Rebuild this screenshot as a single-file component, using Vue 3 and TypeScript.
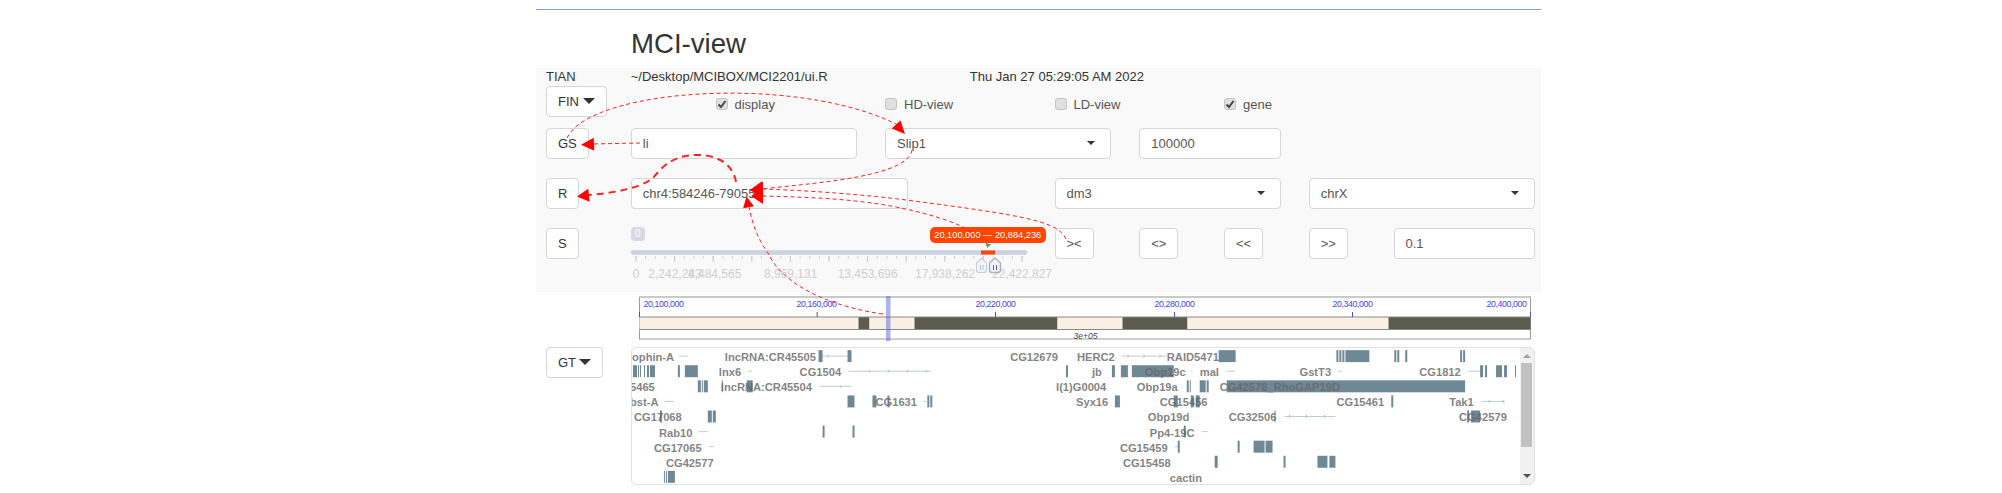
<script setup lang="ts">

type Span = [number, number];

interface GeneLine {
    row: number;
    x1: number;
    x2: number;
    marks?: number[];
}

interface Arrow {
    d: string;
    width: number;
    tip: [number, number];
    from: [number, number];
    len: number;
    wide: number;
}

const rowTop = (row: number) => 350 + row * 15.125;

const labels: [number, number, string][] = [
    [0, 632, 'ophin-A'], [0, 725, 'lncRNA:CR45505'], [0, 1011, 'CG12679'], [0, 1078, 'HERC2'], [0, 1168, 'RAID5471'],
    [1, 719, 'lnx6'], [1, 800, 'CG1504'], [1, 1093, 'jb'], [1, 1146, 'Obp19c'], [1, 1201, 'mal'], [1, 1301, 'GstT3'], [1, 1421, 'CG1812'],
    [2, 630, '5465'], [2, 721, 'lncRNA:CR45504'], [2, 1057, 'l(1)G0004'], [2, 1138, 'Obp19a'], [2, 1221, 'CG42578_RhoGAP19D'],
    [3, 630, 'bst-A'], [3, 876, 'CG1631'], [3, 1077, 'Syx16'], [3, 1161, 'CG15456'], [3, 1338, 'CG15461'], [3, 1451, 'Tak1'],
    [4, 634, 'CG17068'], [4, 1149, 'Obp19d'], [4, 1230, 'CG32506'], [4, 1461, 'CG42579'],
    [5, 659, 'Rab10'], [5, 1151, 'Pp4-19C'],
    [6, 654, 'CG17065'], [6, 1121, 'CG15459'],
    [7, 666, 'CG42577'], [7, 1124, 'CG15458'],
    [8, 1171, 'cactin'],
];

const bars: Span[][] = [
    [[819, 823], [848, 852], [1220, 1237], [1338, 1340], [1341, 1343], [1344, 1346], [1347, 1371], [1396, 1398], [1399, 1401], [1407, 1409], [1462, 1464], [1465, 1467]],
    [[633, 637], [638, 639], [640, 641], [644, 645], [647, 649], [650, 655], [678, 680], [685, 698], [1067, 1069], [1113, 1116], [1122, 1129], [1133, 1175], [1482, 1485], [1487, 1489], [1498, 1504], [1506, 1509], [1517, 1518]],
    [[698, 701], [702, 703], [704, 708], [722, 723], [747, 753], [1188, 1190], [1191, 1192], [1201, 1207], [1208, 1210], [1228, 1467]],
    [[848, 855], [873, 877], [888, 890], [928, 930], [931, 933], [1116, 1121], [1175, 1179], [1192, 1195], [1197, 1201], [1393, 1395]],
    [[660, 662], [708, 712], [713, 716], [1276, 1277], [1469, 1471], [1473, 1482]],
    [[823, 825], [853, 855], [1185, 1187]],
    [[1179, 1181], [1239, 1241], [1255, 1266], [1267, 1274]],
    [[1216, 1219], [1285, 1287], [1319, 1329], [1331, 1337]],
    [[664, 665], [666, 667], [668, 675]],
];

const geneLines: GeneLine[] = [
    { row: 0, x1: 679, x2: 688 },
    { row: 0, x1: 823, x2: 848, marks: [829] },
    { row: 0, x1: 1123, x2: 1168, marks: [1130, 1146, 1162] },
    { row: 1, x1: 748, x2: 752 },
    { row: 1, x1: 849, x2: 932, marks: [871, 890, 909, 928] },
    { row: 1, x1: 1192, x2: 1194 },
    { row: 1, x1: 1228, x2: 1236 },
    { row: 1, x1: 1339, x2: 1344 },
    { row: 1, x1: 1470, x2: 1482 },
    { row: 2, x1: 820, x2: 852, marks: [842] },
    { row: 3, x1: 665, x2: 674 },
    { row: 3, x1: 924, x2: 927 },
    { row: 3, x1: 1483, x2: 1507, marks: [1492, 1506] },
    { row: 4, x1: 1286, x2: 1337, marks: [1292, 1309, 1327] },
    { row: 5, x1: 699, x2: 708 },
    { row: 5, x1: 1203, x2: 1209 },
    { row: 6, x1: 709, x2: 714 },
    { row: 6, x1: 1176, x2: 1179 },
];

const segments: { x: number; w: number; dark: boolean }[] = [
    { x: 639, w: 219, dark: false },
    { x: 858, w: 11, dark: true },
    { x: 869, w: 45, dark: false },
    { x: 914, w: 143, dark: true },
    { x: 1057, w: 65, dark: false },
    { x: 1122, w: 65, dark: true },
    { x: 1187, w: 201, dark: false },
    { x: 1388, w: 142, dark: true },
];

const axisTicks = [639, 816.7, 995, 1174, 1352, 1530];

const majorStep = 38.6;
const majorTicks = Array.from({ length: 11 }, (_, i) => 636 + i * majorStep);
const minorTicks = Array.from({ length: 41 }, (_, i) => 636 + (i * majorStep) / 4);

const gridLabels: [number, string][] = [
    [636, '0'], [675, '2,242,283'], [714.7, '4,484,565'], [790.7, '8,969,131'],
    [867.7, '13,453,696'], [945, '17,938,262'], [1022, '22,422,827'],
];

const arrows: Arrow[] = [
    { d: 'M567 138 C590 88 800 74 900 126', width: 1, tip: [905, 134], from: [890, 118], len: 13, wide: 12 },
    { d: 'M640 143 L592 144', width: 1, tip: [581, 144.7], from: [600, 144], len: 13, wide: 13 },
    { d: 'M736 182 C732 160 712 155 697 155 C670 155 660 170 653 178 C640 188 615 193 588 195', width: 2, tip: [577, 196.5], from: [600, 194], len: 12, wide: 13 },
    { d: 'M912 150 C908 175 830 182 760 189', width: 1, tip: [750, 190], from: [775, 188], len: 13, wide: 16 },
    { d: 'M1066 239 C1058 222 1030 216 906 200 C860 194 800 190 760 189', width: 1, tip: [750, 190], from: [775, 190], len: 13, wide: 16 },
    { d: 'M988 245 C975 230 950 218 896 207 C850 198 800 197 760 196', width: 1, tip: [751, 196], from: [775, 196], len: 12, wide: 16 },
    { d: 'M883 314 C820 305 780 280 768 253 C755 235 752 220 749 207', width: 1, tip: [746.5, 196.5], from: [750, 215], len: 11, wide: 11 },
];

const headPoints = (a: Arrow) => {
    const dx = a.tip[0] - a.from[0];
    const dy = a.tip[1] - a.from[1];
    const n = Math.hypot(dx, dy);
    const ux = dx / n;
    const uy = dy / n;
    const bx = a.tip[0] - ux * a.len;
    const by = a.tip[1] - uy * a.len;
    const hw = a.wide / 2;
    return `${a.tip[0]},${a.tip[1]} ${bx - uy * hw},${by + ux * hw} ${bx + uy * hw},${by - ux * hw}`;
};

</script>

<template>
    <div class="page">
        <hr class="rule" />
        <h2 class="title">MCI-view</h2>

        <div class="well">
            <div class="grid info">
                <div>TIAN</div>
                <div class="span-3">~/Desktop/MCIBOX/MCI2201/ui.R</div>
                <div class="date">Thu Jan 27 05:29:05 AM 2022</div>
            </div>

            <div class="grid row-first">
                <button class="btn">FIN <span class="caret"></span></button>
                <div></div>
                <label class="check">
                    <span class="box"><svg width="10" height="10" viewBox="0 0 10 10"><path d="M1.5 5.5 L4 8 L8.5 2" fill="none" stroke="#444" stroke-width="2" /></svg></span>
                    display
                </label>
                <div></div>
                <label class="check">
                    <span class="box"></span>
                    HD-view
                </label>
                <div></div>
                <label class="check">
                    <span class="box"></span>
                    LD-view
                </label>
                <div></div>
                <label class="check">
                    <span class="box"><svg width="10" height="10" viewBox="0 0 10 10"><path d="M1.5 5.5 L4 8 L8.5 2" fill="none" stroke="#444" stroke-width="2" /></svg></span>
                    gene
                </label>
            </div>

            <div class="grid row-gs">
                <button class="btn">GS</button>
                <div class="field span-3">li</div>
                <div class="field select span-3">Slip1<span class="select-caret"></span></div>
                <div class="field span-2">100000</div>
            </div>

            <div class="grid row-r">
                <button class="btn">R</button>
                <div class="field span-4 chr">chr4:584246-790551</div>
                <div class="field select from-7">dm3<span class="select-caret"></span></div>
                <div class="field select span-3">chrX<span class="select-caret"></span></div>
            </div>

            <div class="grid row-s">
                <button class="btn">S</button>
                <div class="slider span-5">
                    <span class="slider-min">0</span>
                    <span class="slider-tip">20,100,000 — 20,884,236</span>
                    <svg class="slider-svg" width="396" height="64" viewBox="631 228 396 64">
                        <rect x="631" y="250.5" width="396" height="4" rx="2" fill="#ccd3e0" stroke="#c3cbd9" stroke-width="0.5" />
                        <rect x="981" y="250.5" width="14" height="4" fill="#ff4500" />
                        <polygon points="985.5,244 991,244 987.5,248" fill="#4caf50" />
                        <line v-for="t in minorTicks" :key="t" :x1="t" :x2="t" y1="256" y2="259" stroke="#d4d4d4" />
                        <line v-for="t in majorTicks" :key="t" :x1="t" :x2="t" y1="256" y2="262" stroke="#c8c8c8" />
                        <text v-for="g in gridLabels" :key="g[1]" :x="g[0]" y="278" class="grid-label">{{ g[1] }}</text>
                        <g fill="#f2f4f8" stroke="#c9d0dd" stroke-width="1.2">
                            <path d="M976.5 263 L981.5 258 L986.5 263 L986.5 270 Q986.5 272.5 984 272.5 L979 272.5 Q976.5 272.5 976.5 270 Z" />
                        </g>
                        <path d="M980.5 265 V270 M983 265 V270" stroke="#b8c0ce" stroke-width="1" />
                        <path d="M989.5 263 L995 258 L1000.5 263 L1000.5 270 Q1000.5 272.5 998 272.5 L992 272.5 Q989.5 272.5 989.5 270 Z" fill="#f2f4f8" stroke="#a7b1c4" stroke-width="1.4" />
                        <path d="M993.5 265 V270 M996.5 265 V270" stroke="#606a7a" stroke-width="1" />
                    </svg>
                </div>
                <button class="btn col-7 step">&gt;&lt;</button>
                <button class="btn step">&lt;&gt;</button>
                <button class="btn step">&lt;&lt;</button>
                <button class="btn step">&gt;&gt;</button>
                <div class="field span-2">0.1</div>
            </div>
        </div>

        <div class="plot">
            <svg width="893" height="46" viewBox="638.5 296 893 46">
                <rect x="639" y="297" width="891" height="42" fill="#fff" stroke="#9b9b9b" />
                <line x1="639" x2="1530" y1="297" y2="297" stroke="#c9c9c9" stroke-width="2" />
                <rect v-for="s in segments" :key="s.x" :x="s.x" y="317" :width="s.w" height="12.5" :fill="s.dark ? '#5c5b4f' : '#f9efe5'" />
                <line x1="639" x2="1530" y1="317" y2="317" stroke="#8a8a80" />
                <line x1="639" x2="1530" y1="329.5" y2="329.5" stroke="#8a8a80" />
                <line v-for="t in axisTicks" :key="t" :x1="t" :x2="t" y1="312" y2="317" stroke="#4a4ae0" />
                <text x="643" y="307" class="axis-label">20,100,000</text>
                <text x="816" y="307" class="axis-label mid">20,160,000</text>
                <text x="995" y="307" class="axis-label mid">20,220,000</text>
                <text x="1174" y="307" class="axis-label mid">20,280,000</text>
                <text x="1352" y="307" class="axis-label mid">20,340,000</text>
                <text x="1526" y="307" class="axis-label end">20,400,000</text>
                <text x="1073" y="339" class="axis-note">3e+05</text>
                <rect x="885.5" y="296" width="4.5" height="45" fill="#5a66e0" fill-opacity="0.5" />
            </svg>
        </div>

        <div class="grid row-gt">
            <button class="btn">GT <span class="caret"></span></button>
            <div class="genes">
                <svg class="genes-svg" width="890" height="136" viewBox="632 348 890 136">
                    <line v-for="(l, i) in geneLines" :key="'l' + i" :x1="l.x1" :x2="l.x2" :y1="rowTop(l.row) + 6" :y2="rowTop(l.row) + 6" stroke="#bccdd6" />
                    <g v-for="(l, i) in geneLines" :key="'m' + i">
                        <path v-for="m in l.marks ?? []" :key="m" :d="`M${m - 1.5} ${rowTop(l.row) + 4.5} L${m} ${rowTop(l.row) + 6} L${m - 1.5} ${rowTop(l.row) + 7.5}`" fill="none" stroke="#aebfca" />
                    </g>
                    <g v-for="(row, r) in bars" :key="'b' + r">
                        <rect v-for="b in row" :key="b[0]" :x="b[0]" :y="rowTop(r)" :width="b[1] - b[0]" height="12" fill="#6f8896" />
                    </g>
                    <text v-for="t in labels" :key="t[2]" :x="t[1]" :y="rowTop(t[0]) + 11" class="gene-label">{{ t[2] }}</text>
                </svg>
                <div class="scroll">
                    <span class="scroll-up"></span>
                    <span class="scroll-thumb"></span>
                    <span class="scroll-down"></span>
                </div>
            </div>
        </div>

        <svg class="arrows" width="2002" height="493" viewBox="0 0 2002 493">
            <g v-for="(a, i) in arrows" :key="i">
                <path :d="a.d" fill="none" stroke="#f22" :stroke-width="a.width" :stroke-dasharray="a.width > 1.5 ? '7 5' : '4 3'" />
                <polygon :points="headPoints(a)" fill="#f00" />
            </g>
        </svg>
    </div>
</template>

<style scoped>
.page {
    position: relative;
    width: 1005px;
    height: 493px;
    margin-left: 536px;
    font-family: "Liberation Sans", Arial, sans-serif;
    font-size: 13px;
    color: #333;
}

.rule {
    margin: 0;
    position: relative;
    top: 9px;
    height: 1px;
    border: 0;
    background: #86a0d8;
}

.title {
    margin: 0;
    padding: 28px 0 0 95px;
    height: 39px;
    font-size: 27.6px;
    font-weight: 500;
    line-height: 30px;
    color: #333;
}

.well {
    background: #f9f9f9;
    height: 224px;
    padding: 0 6px 0 10px;
    box-sizing: border-box;
}

.grid {
    display: grid;
    grid-template-columns: repeat(12, 56.75px);
    column-gap: 28px;
}

.span-2 { grid-column: span 2; }
.span-3 { grid-column: span 3; }
.span-4 { grid-column: span 4; }
.span-5 { grid-column: span 5; }
.col-7 { grid-column-start: 7; }
.from-7 { grid-column: 7 / span 3; }

.info {
    height: 18px;
    line-height: 18px;
    white-space: nowrap;
}

.date {
    grid-column: 6 / span 4;
}

.row-first {
    height: 42px;
}

.row-gs,
.row-r {
    height: 50px;
}

.btn {
    justify-self: start;
    height: 31px;
    padding: 0 11px;
    font: inherit;
    color: #333;
    background: #fff;
    border: 1px solid #d6d6d6;
    border-radius: 4px;
    white-space: nowrap;
}

.step {
    width: 39px;
    padding: 0;
    text-align: center;
    color: #555;
}

.caret {
    display: inline-block;
    vertical-align: 2px;
    border-top: 6px solid #333;
    border-left: 6px solid transparent;
    border-right: 6px solid transparent;
}

.check {
    display: flex;
    align-items: center;
    gap: 7px;
    height: 20px;
    margin-top: 8px;
    color: #555;
    white-space: nowrap;
}

.box {
    display: flex;
    align-items: center;
    justify-content: center;
    flex: none;
    width: 12px;
    height: 12px;
    background: #e0e0e0;
    border: 1px solid #c4c4c4;
    border-radius: 3px;
    box-sizing: border-box;
}

.field {
    position: relative;
    height: 31px;
    padding: 0 11px;
    line-height: 29px;
    color: #555;
    background: #fff;
    border: 1px solid #d6d6d6;
    border-radius: 4px;
    box-sizing: border-box;
    white-space: nowrap;
    overflow: hidden;
}

.chr {
    width: 277px;
}

.select-caret {
    position: absolute;
    top: 12px;
    right: 15px;
    border-top: 4.5px solid #333;
    border-left: 4px solid transparent;
    border-right: 4px solid transparent;
}

.slider {
    position: relative;
    height: 64px;
}

.slider-svg {
    display: block;
    overflow: visible;
}

.slider-min {
    position: absolute;
    left: 0;
    top: -1px;
    width: 14px;
    height: 14px;
    line-height: 14px;
    font-size: 10px;
    text-align: center;
    color: #fff;
    background: #d5dae5;
    border-radius: 4px;
}

.slider-tip {
    position: absolute;
    left: 299px;
    top: -1px;
    width: 116px;
    height: 16px;
    line-height: 16px;
    font-size: 9.25px;
    text-align: center;
    color: #fff;
    background: #ff4500;
    border-radius: 5px;
    white-space: nowrap;
}

.grid-label {
    font-size: 12px;
    fill: #cfcfcf;
    text-anchor: middle;
}

.plot {
    height: 55px;
    padding: 4px 0 0 102.5px;
    box-sizing: border-box;
}

.plot svg {
    display: block;
}

.axis-label {
    font-size: 8.8px;
    letter-spacing: -0.4px;
    fill: #4444ee;
}

.axis-label.mid {
    text-anchor: middle;
}

.axis-label.end {
    text-anchor: end;
}

.axis-note {
    font-size: 8.5px;
    font-style: italic;
    fill: #444;
}

.row-gt {
    padding-left: 10px;
    height: 138px;
}

.genes {
    grid-column: 2 / span 11;
    display: flex;
    height: 138px;
    background: #fff;
    border: 1px solid #e2e2e2;
    border-radius: 5px;
    box-sizing: border-box;
    overflow: hidden;
}

.genes-svg {
    display: block;
    flex: none;
    width: 888px;
}

.gene-label {
    font-size: 11.2px;
    font-weight: 700;
    fill: #666;
    fill-opacity: 0.82;
}

.scroll {
    position: relative;
    flex: 1;
    background: #f1f1f1;
}

.scroll-up,
.scroll-down {
    position: absolute;
    left: 3px;
    border-left: 4px solid transparent;
    border-right: 4px solid transparent;
}

.scroll-up {
    top: 6px;
    border-bottom: 4px solid #a3a3a3;
}

.scroll-down {
    bottom: 6px;
    border-top: 4px solid #505050;
}

.scroll-thumb {
    position: absolute;
    top: 15px;
    left: 1px;
    width: 11px;
    height: 84px;
    background: #c1c1c1;
}

.arrows {
    position: absolute;
    left: -536px;
    top: 0;
    pointer-events: none;
}
</style>

<style>
html,
body {
    margin: 0;
    background: #fff;
    overflow: hidden;
}
</style>
